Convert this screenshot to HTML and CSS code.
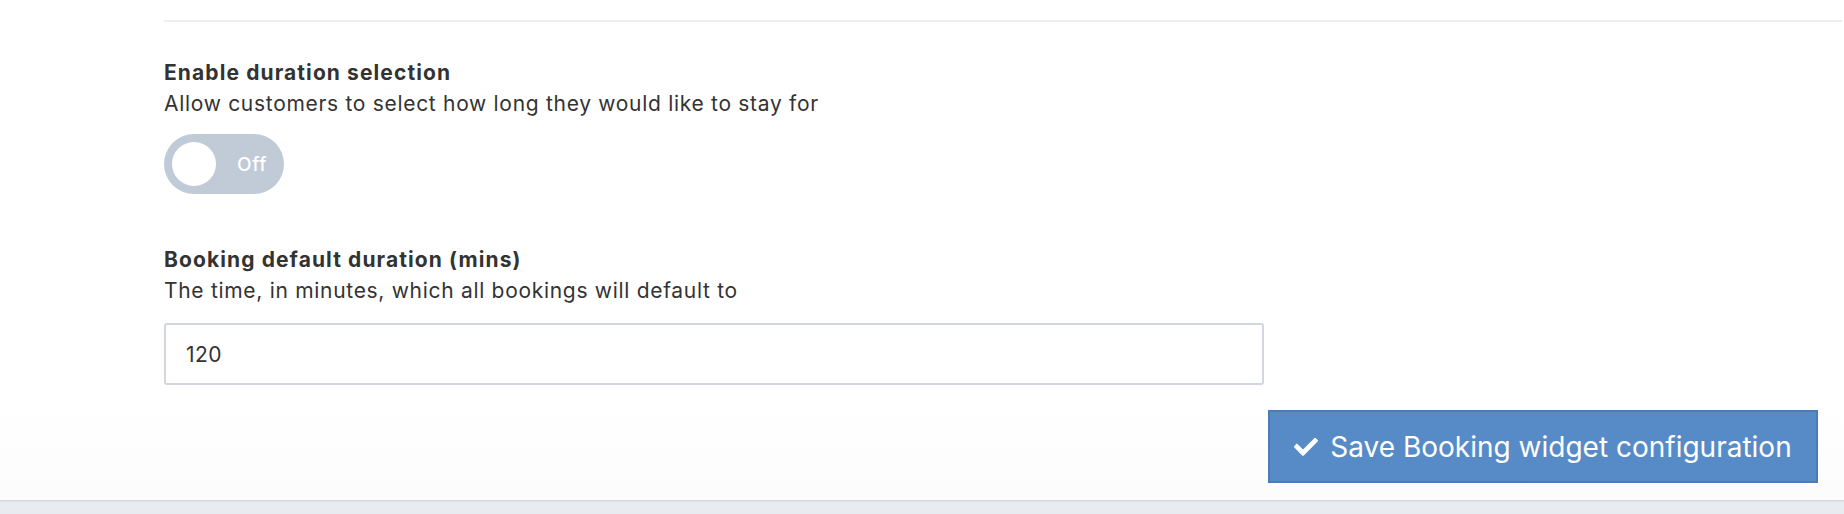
FILE: index.html
```html
<!DOCTYPE html>
<html lang="en">
<head>
<meta charset="utf-8">
<title>Booking widget configuration</title>
<link rel="stylesheet" href="styles.css">
</head>
<body>
<div class="card">
  <div class="content">
    <div class="divider"></div>
    <div class="field field-toggle">
      <div class="label">Enable duration selection</div>
      <div class="help">Allow customers to select how long they would like to stay for</div>
      <div class="toggle">
        <span class="knob"></span>
        <span class="toggle-text">Off</span>
      </div>
    </div>
    <div class="field">
      <div class="label">Booking default duration (mins)</div>
      <div class="help">The time, in minutes, which all bookings will default to</div>
      <div class="input">120</div>
    </div>
    <div class="actions">
      <button class="btn-save" type="button">
        <svg class="check" viewBox="0 72 512 376" width="24" height="18" aria-hidden="true"><path fill="#fff" d="M173.898 439.404l-166.4-166.4c-9.997-9.997-9.997-26.206 0-36.204l36.203-36.204c9.997-9.998 26.207-9.998 36.204 0L192 312.69 432.095 72.596c9.997-9.997 26.207-9.997 36.204 0l36.203 36.204c9.997 9.997 9.997 26.206 0 36.204l-294.4 294.401c-9.998 9.997-26.207 9.997-36.204-.001z"/></svg>
        <span>Save Booking widget configuration</span>
      </button>
    </div>
  </div>
</div>
</body>
</html>
```

FILE: styles.css
```css
html, body {
  margin: 0;
  padding: 0;
}
body {
  background: #e8ebf0;
  font-family: Inter, "Liberation Sans", sans-serif;
  color: #333333;
  height: 514px;
  overflow: hidden;
}
.card {
  background: linear-gradient(to bottom, #ffffff 0%, #ffffff 80%, #fcfcfc 100%);
  height: 500px;
  box-shadow: 0 1px 0 #d3d5da, 0 2px 2px rgba(0,0,0,0.04);
}
.content {
  padding: 20px 2px 0 164px;
  display: flex;
  flex-direction: column;
}
.divider {
  height: 2px;
  background: #eeeeee;
}
.field {
  display: flex;
  flex-direction: column;
  align-items: flex-start;
}
.field-toggle {
  margin-top: 34.5px;
}
.label {
  font-weight: 700;
  font-size: 21px;
  line-height: 31px;
  letter-spacing: 1.1px;
}
.help {
  font-size: 21px;
  line-height: 31px;
  letter-spacing: 0.7px;
}
.toggle {
  margin-top: 15.5px;
  width: 120px;
  height: 60px;
  border-radius: 30px;
  background: #c1cbd8;
  display: flex;
  align-items: center;
  box-sizing: border-box;
  padding: 0 17px 0 8px;
  justify-content: space-between;
}
.knob {
  width: 44px;
  height: 44px;
  border-radius: 50%;
  background: #ffffff;
}
.toggle-text {
  color: #ffffff;
  font-weight: 500;
  font-size: 19px;
  letter-spacing: 0.6px;
}
.field + .field {
  margin-top: 49.5px;
}
.input {
  margin-top: 17.5px;
  width: 1100px;
  height: 62px;
  box-sizing: border-box;
  border: 2px solid #d3d6de;
  border-radius: 3px;
  padding: 0 20px;
  display: flex;
  align-items: center;
  font-size: 21px;
  letter-spacing: 0.5px;
  color: #333333;
}
.actions {
  display: flex;
  justify-content: flex-end;
  margin-top: 25px;
  padding-right: 24px;
}
.btn-save {
  width: 550px;
  height: 73px;
  background: #578bc7;
  border: 2px solid #4a7cb9;
  border-radius: 0;
  color: #ffffff;
  font-family: Inter, "Liberation Sans", sans-serif;
  font-size: 28px;
  display: flex;
  align-items: center;
  justify-content: center;
  gap: 12px;
  padding: 0;
}
.check {
  display: block;
}
```
